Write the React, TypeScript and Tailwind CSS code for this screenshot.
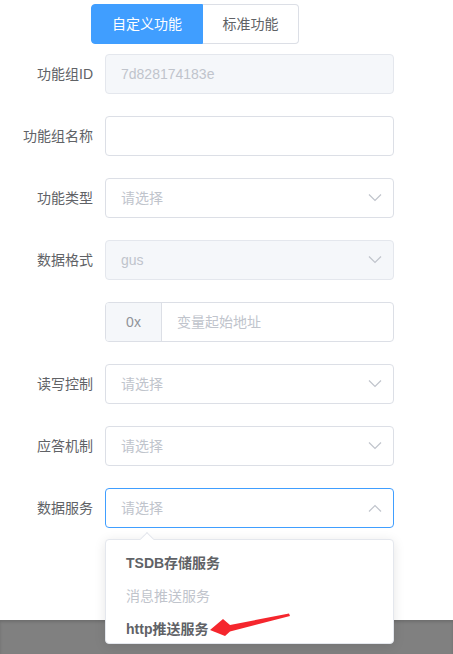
import React from 'react';

const labelCls = 'w-[105px] pr-3 text-right text-sm text-[#606266] leading-10 shrink-0';

function Chevron({ up = false }: { up?: boolean }) {
  return (
    <svg width="14" height="8" viewBox="0 0 14 8" className="shrink-0">
      <path
        d={up ? 'M1 7.5 L7 1.5 L13 7.5' : 'M1 0.5 L7 6.5 L13 0.5'}
        fill="none"
        stroke="#c0c4cc"
        strokeWidth="1.2"
      />
    </svg>
  );
}

function Select({
  value,
  placeholder,
  disabled = false,
  open = false,
}: {
  value?: string;
  placeholder?: string;
  disabled?: boolean;
  open?: boolean;
}) {
  return (
    <div
      className={
        'w-[289px] h-10 rounded border flex items-center pl-[15px] pr-[11px] ' +
        (open
          ? 'border-[#409eff] bg-white'
          : disabled
            ? 'border-[#e4e7ed] bg-[#f5f7fa]'
            : 'border-[#dcdfe6] bg-white')
      }
    >
      <span className="flex-1 text-sm text-[#c0c4cc]">{value ?? placeholder}</span>
      <Chevron up={open} />
    </div>
  );
}

function Row({ label, children }: { label?: string; children: React.ReactNode }) {
  return (
    <div className="flex items-center mb-[22px]">
      <div className={labelCls}>{label}</div>
      {children}
    </div>
  );
}

export default function App() {
  return (
    <div
      className="relative w-[453px] h-[654px] bg-white overflow-hidden"
      style={{ fontFamily: '"Liberation Sans", "Noto Sans CJK SC", sans-serif' }}
    >
      <div className="h-[620px] pt-1">
        {/* tabs */}
        <div className="ml-[91px] flex h-10 w-[208px]">
          <div className="w-[112px] h-10 rounded-l bg-[#409eff] border border-[#409eff] text-white text-sm flex items-center justify-center">
            自定义功能
          </div>
          <div className="w-[96px] h-10 rounded-r bg-white border border-l-0 border-[#dcdfe6] text-[#606266] text-sm flex items-center justify-center">
            标准功能
          </div>
        </div>

        <div className="mt-[10px]">
          <Row label="功能组ID">
            <div className="w-[289px] h-10 rounded border border-[#e4e7ed] bg-[#f5f7fa] flex items-center pl-[15px] text-sm text-[#c0c4cc]">
              7d828174183e
            </div>
          </Row>
          <Row label="功能组名称">
            <div className="w-[289px] h-10 rounded border border-[#dcdfe6] bg-white" />
          </Row>
          <Row label="功能类型">
            <Select placeholder="请选择" />
          </Row>
          <Row label="数据格式">
            <Select value="gus" disabled />
          </Row>
          <Row>
            <div className="w-[289px] h-10 rounded border border-[#dcdfe6] bg-white flex overflow-hidden">
              <div className="w-[56px] h-full bg-[#f5f7fa] border-r border-[#dcdfe6] flex items-center justify-center text-sm text-[#909399]">
                0x
              </div>
              <div className="flex-1 flex items-center pl-[15px] text-sm text-[#c0c4cc]">变量起始地址</div>
            </div>
          </Row>
          <Row label="读写控制">
            <Select placeholder="请选择" />
          </Row>
          <Row label="应答机制">
            <Select placeholder="请选择" />
          </Row>
          <Row label="数据服务">
            <Select placeholder="请选择" open />
          </Row>
        </div>
      </div>

      {/* dimmed footer */}
      <div className="h-[34px] bg-[#808080] shadow-[inset_0_2px_3px_rgba(0,0,0,0.15)]" />

      {/* dropdown */}
      <div className="absolute left-[105px] top-[539px] w-[289px] h-[105px] rounded bg-white border border-[#e4e7ed] shadow-[0_2px_12px_rgba(0,0,0,0.1)]">
        <div className="absolute -top-[6px] left-[36px] w-[10px] h-[10px] rotate-45 bg-white border-l border-t border-[#e4e7ed]" />
        <div className="relative h-full overflow-hidden pt-[6px]">
          <div className="h-[33px] px-5 flex items-center text-sm font-bold text-[#606266]">TSDB存储服务</div>
          <div className="h-[33px] px-5 flex items-center text-sm text-[#c0c4cc]">消息推送服务</div>
          <div className="h-[33px] px-5 flex items-center text-sm font-bold text-[#606266]">http推送服务</div>
        </div>
      </div>

      {/* red annotation arrow */}
      <svg className="absolute left-[205px] top-[610px]" width="90" height="30" viewBox="0 0 90 30">
        <polygon points="5,20 18,9 25,15 84,3.5 85,6 25,21.5 20,26" fill="#f5262d" />
      </svg>
    </div>
  );
}
